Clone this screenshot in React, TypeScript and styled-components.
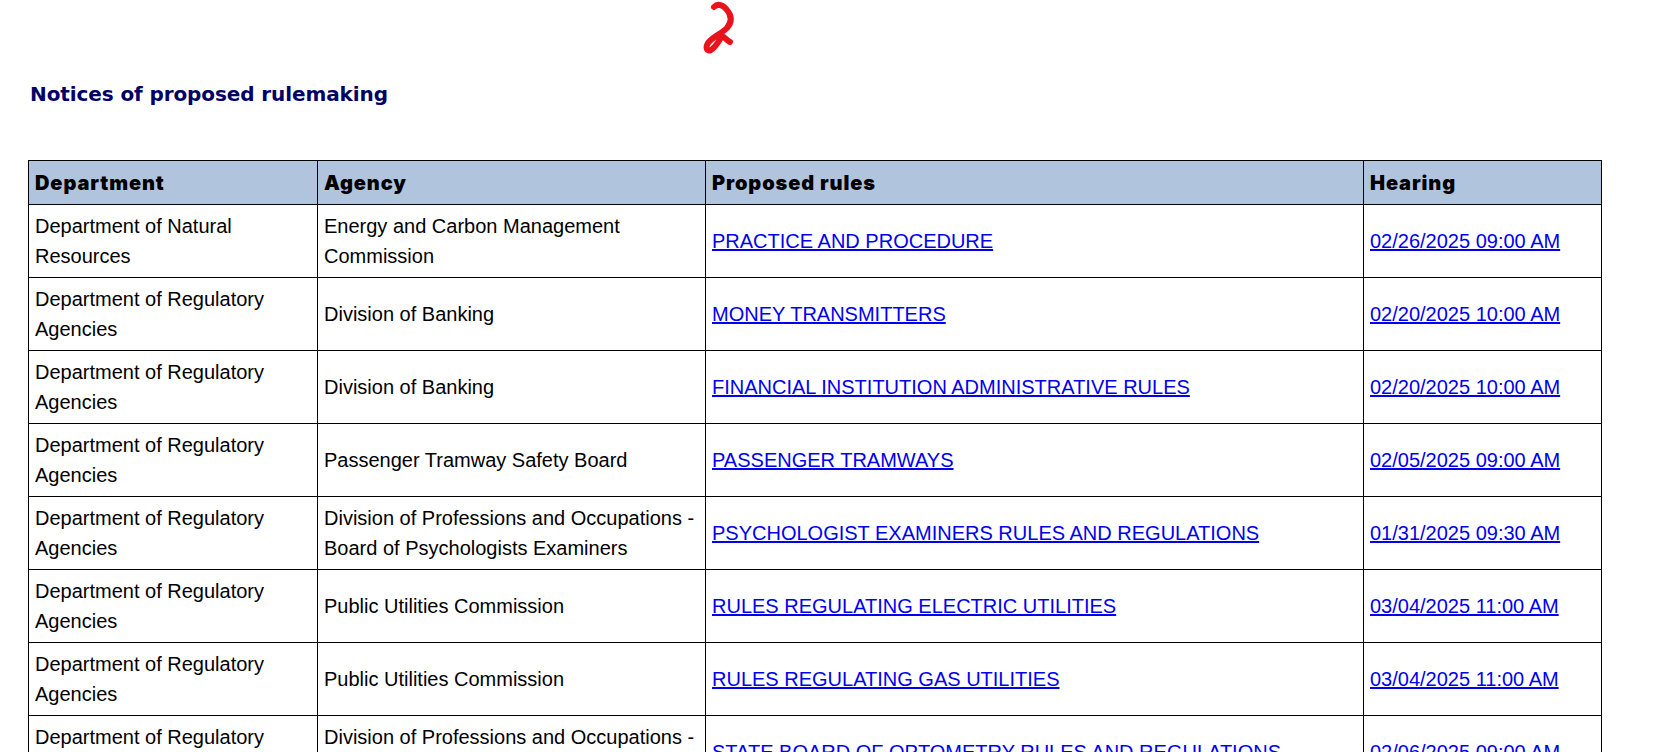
import React from 'react'
import styled, { createGlobalStyle } from 'styled-components'

const GlobalStyle = createGlobalStyle`
  html, body {
    margin: 0;
    padding: 0;
    height: 752px;
    overflow: hidden;
    background: #fff;
  }
`

const Page = styled.div`
  position: relative;
  padding: 81px 0 0 28px;
  font-family: "Liberation Sans", Arial, sans-serif;
  color: #000;
`

const Scribble = styled.svg`
  position: absolute;
  left: 660px;
  top: 0;
`

const Title = styled.h2`
  margin: 0 0 53px 2px;
  height: 26px;
  font-family: "DejaVu Sans", Verdana, sans-serif;
  font-size: 20px;
  letter-spacing: -0.1px;
  line-height: 26px;
  font-weight: 700;
  color: #000066;
`

const Table = styled.table`
  width: 1573px;
  table-layout: fixed;
  border-collapse: collapse;
  font-size: 20px;
`

const HeadCell = styled.th<{ $width: number }>`
  box-sizing: border-box;
  width: ${(p) => p.$width}px;
  height: 44px;
  padding: 0 6px;
  border: 1px solid #000;
  background: #b0c4de;
  text-align: left;
  font-family: Inter, "Liberation Sans", sans-serif;
  font-size: 20px;
  font-weight: 900;
  letter-spacing: 0.9px;
`

const Row = styled.tr`
  height: 73px;
`

const Cell = styled.td`
  padding: 6px;
  border: 1px solid #000;
  line-height: 30px;
  vertical-align: middle;
`

const RuleLink = styled.a`
  color: #0000ee;
  text-decoration: underline;
`

const COLUMNS = [
  { label: 'Department', width: 289 },
  { label: 'Agency', width: 388 },
  { label: 'Proposed rules', width: 658 },
  { label: 'Hearing', width: 238 },
]

const REGULATORY = 'Department of Regulatory Agencies'

const NOTICES = [
  { department: 'Department of Natural Resources', agency: 'Energy and Carbon Management Commission', rule: 'PRACTICE AND PROCEDURE', hearing: '02/26/2025 09:00 AM' },
  { department: REGULATORY, agency: 'Division of Banking', rule: 'MONEY TRANSMITTERS', hearing: '02/20/2025 10:00 AM' },
  { department: REGULATORY, agency: 'Division of Banking', rule: 'FINANCIAL INSTITUTION ADMINISTRATIVE RULES', hearing: '02/20/2025 10:00 AM' },
  { department: REGULATORY, agency: 'Passenger Tramway Safety Board', rule: 'PASSENGER TRAMWAYS', hearing: '02/05/2025 09:00 AM' },
  { department: REGULATORY, agency: 'Division of Professions and Occupations - Board of Psychologists Examiners', rule: 'PSYCHOLOGIST EXAMINERS RULES AND REGULATIONS', hearing: '01/31/2025 09:30 AM' },
  { department: REGULATORY, agency: 'Public Utilities Commission', rule: 'RULES REGULATING ELECTRIC UTILITIES', hearing: '03/04/2025 11:00 AM' },
  { department: REGULATORY, agency: 'Public Utilities Commission', rule: 'RULES REGULATING GAS UTILITIES', hearing: '03/04/2025 11:00 AM' },
  { department: REGULATORY, agency: 'Division of Professions and Occupations - State Board of Optometry', rule: 'STATE BOARD OF OPTOMETRY RULES AND REGULATIONS', hearing: '02/06/2025 09:00 AM' },
]

const App: React.FC = () => {
  return (
    <Page>
      <GlobalStyle />
      <Scribble width="90" height="60" viewBox="0 0 90 60">
        <path
          d="M54 7 C58 3 63 5 67 10 C72 16 72 22 67 28 C61 34 52 37 48 43 C45 48 47 52 51 50 C56 47 59 41 62 36 C65 37 66 40 70 42"
          fill="none"
          stroke="#e8141c"
          strokeWidth="6"
          strokeLinecap="round"
          strokeLinejoin="round"
        />
      </Scribble>
      <Title>Notices of proposed rulemaking</Title>
      <Table>
        <thead>
          <tr>
            {COLUMNS.map((col) => (
              <HeadCell key={col.label} $width={col.width}>{col.label}</HeadCell>
            ))}
          </tr>
        </thead>
        <tbody>
          {NOTICES.map((notice) => (
            <Row key={notice.rule}>
              <Cell>{notice.department}</Cell>
              <Cell>{notice.agency}</Cell>
              <Cell><RuleLink href="#">{notice.rule}</RuleLink></Cell>
              <Cell><RuleLink href="#">{notice.hearing}</RuleLink></Cell>
            </Row>
          ))}
        </tbody>
      </Table>
    </Page>
  )
}

export default App
